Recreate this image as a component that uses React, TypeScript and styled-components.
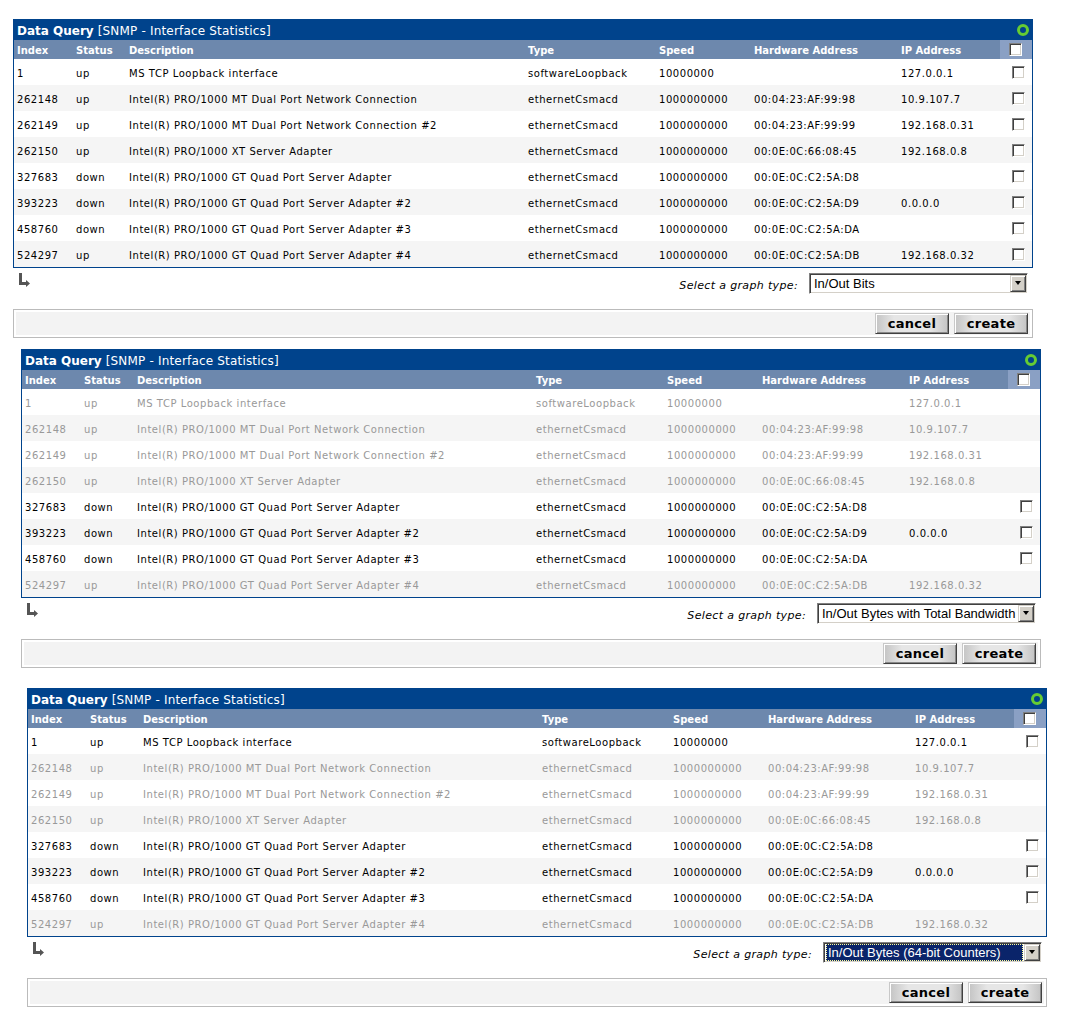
import React from "react";
import styled, { createGlobalStyle } from "styled-components";

const Global = createGlobalStyle`
  html, body { margin: 0; padding: 0; background: #ffffff; }
  body { font-family: "DejaVu Sans", Verdana, sans-serif; }
`;

const Page = styled.div`
  display: flex;
  flex-direction: column;
  padding-bottom: 20px;
`;

const Block = styled.section<{ $left: number; $top: number }>`
  width: 1020px;
  margin-left: ${(p) => p.$left}px;
  margin-top: ${(p) => p.$top}px;
  display: flex;
  flex-direction: column;
`;

const Panel = styled.div`
  border: 1px solid #00438c;
  background: #ffffff;
`;

const TitleBar = styled.div`
  height: 20px;
  background: #00438c;
  color: #ffffff;
  display: flex;
  align-items: center;
  justify-content: space-between;
  padding: 0 3px 0 3px;
  font-size: 12px;
  line-height: 20px;
`;

const TitleText = styled.div`
  white-space: nowrap;
  padding-top: 2px;
  letter-spacing: 0.18px;
  b { font-weight: bold; letter-spacing: 0; }
`;

const StatusRing = styled.span`
  width: 12px;
  height: 12px;
  box-sizing: border-box;
  border-radius: 50%;
  border: 3px solid #66cc33;
  margin-top: 0;
`;

const Table = styled.table`
  width: 1018px;
  border-collapse: collapse;
  table-layout: fixed;
`;

const HeadCell = styled.th<{ $check?: boolean }>`
  height: 19px;
  box-sizing: border-box;
  padding: ${(p) => (p.$check ? "0 0 0 9px" : "1px 0 0 3px")};
  background: ${(p) => (p.$check ? "#8aa0c4" : "#6d88ad")};
  color: #ffffff;
  font-size: 10px;
  font-weight: bold;
  text-align: left;
  white-space: nowrap;
  vertical-align: middle;
`;

const Row = styled.tr<{ $alt: boolean }>`
  background: ${(p) => (p.$alt ? "#f5f5f5" : "#ffffff")};
`;

const Cell = styled.td<{ $dim: boolean; $check?: boolean }>`
  height: 26px;
  box-sizing: border-box;
  padding: ${(p) => (p.$check ? "0 0 0 12px" : "2px 0 0 3px")};
  font-size: 10px;
  letter-spacing: 0.55px;
  color: ${(p) => (p.$dim ? "#999999" : "#000000")};
  white-space: nowrap;
  overflow: hidden;
  vertical-align: middle;
`;

const CheckBox = styled.span<{ $head?: boolean }>`
  display: block;
  width: 13px;
  height: 13px;
  box-sizing: border-box;
  border: 1px solid;
  border-color: #808080 #ffffff #ffffff #808080;
  box-shadow: inset 1px 1px 0 #404040, inset -1px -1px 0 #d4d0c8;
  background: #ffffff;
  margin-top: ${(p) => (p.$head ? 0 : 1)}px;
`;

const Controls = styled.div`
  margin-top: 5px;
  height: 20px;
  display: flex;
  align-items: center;
  justify-content: space-between;
  padding: 0 5px 0 5px;
`;

const ArrowIcon = styled.svg`
  width: 12px;
  height: 14px;
  align-self: flex-start;
`;

const Picker = styled.div`
  display: flex;
  align-items: center;
  gap: 11px;
`;

const PickerLabel = styled.span`
  font-size: 11px;
  font-style: italic;
  letter-spacing: 0.35px;
  color: #000000;
  white-space: nowrap;
  margin-top: 5px;
`;

const SelectBox = styled.div`
  width: 219px;
  height: 21px;
  box-sizing: border-box;
  border: 1px solid;
  border-color: #808080 #ffffff #ffffff #808080;
  box-shadow: inset 1px 1px 0 #404040, inset -1px -1px 0 #d4d0c8;
  background: #ffffff;
  display: flex;
  align-items: center;
  padding: 1px;
`;

const SelectValue = styled.span<{ $focus: boolean }>`
  flex: 1;
  height: 17px;
  margin-right: 1px;
  padding-left: ${(p) => (p.$focus ? 2 : 3)}px;
  margin-left: ${(p) => (p.$focus ? 1 : 0)}px;
  box-sizing: border-box;
  font-family: "Liberation Sans", Arial, sans-serif;
  font-size: 13px;
  line-height: 17px;
  white-space: nowrap;
  overflow: hidden;
  color: ${(p) => (p.$focus ? "#ffffff" : "#000000")};
  background: ${(p) => (p.$focus ? "#0a246a" : "transparent")};
  outline: ${(p) => (p.$focus ? "1px dotted #ffff99" : "none")};
  outline-offset: -1px;
`;

const DropButton = styled.span`
  width: 16px;
  height: 17px;
  box-sizing: border-box;
  background: #d4d0c8;
  border: 1px solid;
  border-color: #d4d0c8 #404040 #404040 #d4d0c8;
  box-shadow: inset 1px 1px 0 #ffffff, inset -1px -1px 0 #808080;
  display: flex;
  align-items: center;
  justify-content: center;
  &::after {
    content: "";
    width: 0;
    height: 0;
    border-left: 3.5px solid transparent;
    border-right: 3.5px solid transparent;
    border-top: 4px solid #000000;
  }
`;

const ButtonBar = styled.div`
  margin-top: 16px;
  border: 1px solid #bbbbbb;
  padding: 2px;
`;

const ButtonFill = styled.div`
  background: #f3f3f3;
  display: flex;
  justify-content: flex-end;
  gap: 5px;
  padding: 1px 2px;
`;

const Button = styled.button`
  width: 74px;
  height: 21px;
  box-sizing: border-box;
  padding: 1px 0 0 0;
  border: 1px solid;
  border-color: #c8c8c8 #404040 #404040 #c8c8c8;
  box-shadow: inset 1px 1px 0 #ffffff, inset -1px -1px 0 #888888;
  background: linear-gradient(to right, #c4c4c4 0%, #e6e6e6 25%, #e6e6e6 75%, #c4c4c4 100%);
  font-family: "DejaVu Sans", Verdana, sans-serif;
  font-size: 13px;
  font-weight: bold;
  letter-spacing: 0.3px;
  color: #000000;
  line-height: 18px;
  cursor: pointer;
`;

type Iface = [string, string, string, string, string, string, string];

const rows: Iface[] = [
  ["1", "up", "MS TCP Loopback interface", "softwareLoopback", "10000000", "", "127.0.0.1"],
  ["262148", "up", "Intel(R) PRO/1000 MT Dual Port Network Connection", "ethernetCsmacd", "1000000000", "00:04:23:AF:99:98", "10.9.107.7"],
  ["262149", "up", "Intel(R) PRO/1000 MT Dual Port Network Connection #2", "ethernetCsmacd", "1000000000", "00:04:23:AF:99:99", "192.168.0.31"],
  ["262150", "up", "Intel(R) PRO/1000 XT Server Adapter", "ethernetCsmacd", "1000000000", "00:0E:0C:66:08:45", "192.168.0.8"],
  ["327683", "down", "Intel(R) PRO/1000 GT Quad Port Server Adapter", "ethernetCsmacd", "1000000000", "00:0E:0C:C2:5A:D8", ""],
  ["393223", "down", "Intel(R) PRO/1000 GT Quad Port Server Adapter #2", "ethernetCsmacd", "1000000000", "00:0E:0C:C2:5A:D9", "0.0.0.0"],
  ["458760", "down", "Intel(R) PRO/1000 GT Quad Port Server Adapter #3", "ethernetCsmacd", "1000000000", "00:0E:0C:C2:5A:DA", ""],
  ["524297", "up", "Intel(R) PRO/1000 GT Quad Port Server Adapter #4", "ethernetCsmacd", "1000000000", "00:0E:0C:C2:5A:DB", "192.168.0.32"],
];

const headers = ["Index", "Status", "Description", "Type", "Speed", "Hardware Address", "IP Address"];
const widths = [59, 53, 399, 131, 95, 147, 102, 32];

type Config = {
  left: number;
  top: number;
  disabled: number[];
  graph: string;
  focus: boolean;
};

const configs: Config[] = [
  { left: 13, top: 19, disabled: [], graph: "In/Out Bits", focus: false },
  { left: 21, top: 11, disabled: [0, 1, 2, 3, 7], graph: "In/Out Bytes with Total Bandwidth", focus: false },
  { left: 27, top: 20, disabled: [1, 2, 3, 7], graph: "In/Out Bytes (64-bit Counters)", focus: true },
];

const QueryBlock: React.FC<{ cfg: Config }> = ({ cfg }) => (
  <Block $left={cfg.left} $top={cfg.top}>
    <Panel>
      <TitleBar>
        <TitleText>
          <b>Data Query</b> [SNMP - Interface Statistics]
        </TitleText>
        <StatusRing />
      </TitleBar>
      <Table>
        <colgroup>
          {widths.map((w, i) => (
            <col key={i} style={{ width: w }} />
          ))}
        </colgroup>
        <thead>
          <tr>
            {headers.map((h) => (
              <HeadCell key={h}>{h}</HeadCell>
            ))}
            <HeadCell $check>
              <CheckBox $head />
            </HeadCell>
          </tr>
        </thead>
        <tbody>
          {rows.map((r, i) => {
            const dim = cfg.disabled.includes(i);
            return (
              <Row key={r[0]} $alt={i % 2 === 1}>
                {r.map((v, j) => (
                  <Cell key={j} $dim={dim}>
                    {v}
                  </Cell>
                ))}
                <Cell $dim={dim} $check>
                  {!dim && <CheckBox />}
                </Cell>
              </Row>
            );
          })}
        </tbody>
      </Table>
    </Panel>
    <Controls>
      <ArrowIcon viewBox="0 0 12 14">
        <path d="M1 0H4V9H8V7L12 10.5L8 14V12H1Z" fill="#555555" />
      </ArrowIcon>
      <Picker>
        <PickerLabel>Select a graph type:</PickerLabel>
        <SelectBox>
          <SelectValue $focus={cfg.focus}>{cfg.graph}</SelectValue>
          <DropButton />
        </SelectBox>
      </Picker>
    </Controls>
    <ButtonBar>
      <ButtonFill>
        <Button type="button">cancel</Button>
        <Button type="button">create</Button>
      </ButtonFill>
    </ButtonBar>
  </Block>
);

export default function App() {
  return (
    <Page>
      <Global />
      {configs.map((c, i) => (
        <QueryBlock key={i} cfg={c} />
      ))}
    </Page>
  );
}
